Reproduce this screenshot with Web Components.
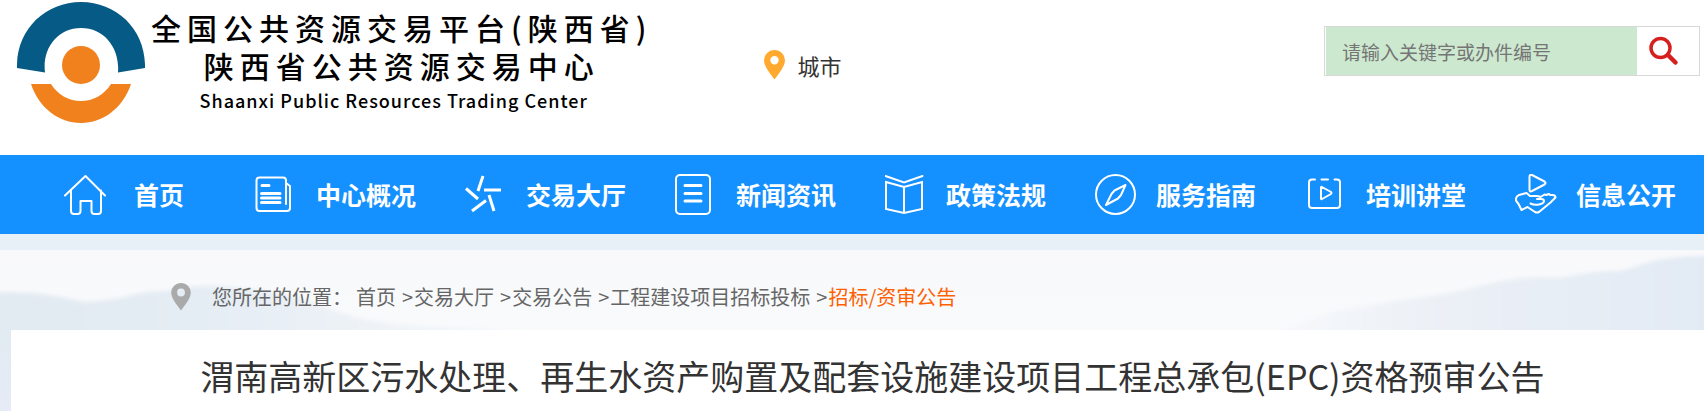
<!DOCTYPE html>
<html lang="zh-CN">
<head>
<meta charset="UTF-8">
<meta name="viewport" content="width=device-width, initial-scale=1.0">
<title>陕西省公共资源交易中心</title>
<style>
    body {
        margin: 0;
        background-color: #fff;
        color: #333;
        font-family: "Noto Sans CJK SC", sans-serif;
    }
</style>
</head>
<body>
<trade-page>
    <site-header slot="header"></site-header>
    <site-nav slot="nav">
        <nav-item icon="home">首页</nav-item>
        <nav-item icon="news">中心概况</nav-item>
        <nav-item icon="star">交易大厅</nav-item>
        <nav-item icon="list">新闻资讯</nav-item>
        <nav-item icon="book">政策法规</nav-item>
        <nav-item icon="compass">服务指南</nav-item>
        <nav-item icon="video">培训讲堂</nav-item>
        <nav-item icon="hand">信息公开</nav-item>
    </site-nav>
    <bread-crumb>
        <crumb-link>首页</crumb-link>
        <crumb-link>交易大厅</crumb-link>
        <crumb-link>交易公告</crumb-link>
        <crumb-link>工程建设项目招标投标</crumb-link>
        <crumb-link current>招标/资审公告</crumb-link>
    </bread-crumb>
    <notice-panel>渭南高新区污水处理、再生水资产购置及配套设施建设项目工程总承包(EPC)资格预审公告</notice-panel>
</trade-page>

<script>
function render(element, html) {
    const template = document.createElement('template');
    template.innerHTML = html;
    element.attachShadow({ mode: 'open' }).appendChild(template.content.cloneNode(true));
}

const ICONS = {
    home: '<path d="M1 21.5 21.5 2 41 21.5M7 16.5V37q0 3 3 3h3.5q3 0 3-3V27h11v10q0 3 3 3H34q3 0 3-3V16.5"/>',
    news: '<path d="M31 30V6.5q0-3-3-3H4.500q-3 0-3 3V34q0 3 3 3H32q3 0 3-3V12l-4-3"/><path stroke-width="3" d="M7 11.5h7M6.500 19.500h18.500M6.500 24h18.500M6.500 28.500h18.500"/>',
    star: '<path stroke-width="3" stroke-linecap="butt" d="M18 2 13 17M19 16h17M24 21l5 16M21 26.5 7 37M1 14.5 13 25"/>',
    list: '<rect x="1" y="1" width="34" height="39" rx="4"/><path stroke-width="3" d="M10 11.5h16M10 19.5h16M10 27h16"/>',
    book: '<path d="M.5 2 19 8.5 37.5 2M1 8l18 5 18-5v27l-18 4-18-4zM19 13v26" stroke-linejoin="miter"/>',
    compass: '<circle cx="20.5" cy="20.5" r="19.5"/><path d="M30.5 11 26 21l-3 3.5L11 31l5.5-11 3-3.5z"/>',
    video: '<path d="M10 5.5H7q-3 0-3 3V31q0 3 3 3h25q3 0 3-3V8.5q0-3-3-3h-2.5M16.5 5.5H23M16 13.5v11q0 1 1 .5l9-5q1-1 0-2l-9-5q-1-.5-1 .5z"/>',
    hand: '<path d="M14.500 3v12.500q0 3 2.500 1.500l12.500-6.500q2-1.500 0-3L17 1q-2.500-1-2.500 2z"/><path d="M1 24.500Q1.500 22 4 21l7.500-2 3.500 3h6.500q2 0 4 1l4-2.500 2 .500 2-1 2 1h2q3 0 3 2.500l-5 5L24 38q-2 1-4 0l-7.500-5-6 3Q4 30 1 26.500zM15.500 29.500q4 2 8.500 1 5-1 5-3.500 0-2-3-2h-4"/>'
};

const PIN = '<path fill-rule="evenodd" d="M10.500 0A10.300 10.300 0 0 0 0 10.300C0 16 5.500 23 10.500 29.500 15.500 23 21 16 21 10.300A10.300 10.300 0 0 0 10.500 0zm0 6a4.200 4.200 0 1 1 0 8.400 4.200 4.200 0 0 1 0-8.400z"/>';

class TradePage extends HTMLElement {
    constructor() {
        super();
        render(this, `
            <style>
                :host { display: block; }
                .body {
                    position: relative;
                    margin-top: 16px;
                    background: linear-gradient(#f9f9fb, #f8fafc 80px, #edf1f9);
                }
                .strip { background-color: #e8f0f7; display: flow-root; }
                .hills {
                    position: absolute;
                    left: 0;
                    top: 0;
                    width: 100%;
                    height: 161px;
                }
                main { position: relative; }
            </style>
            <slot name="header"></slot>
            <slot name="nav"></slot>
            <div class="strip">
                <div class="body">
                    <svg class="hills" viewBox="0 0 1704 161" preserveAspectRatio="none" aria-hidden="true">
                        <defs>
                            <linearGradient id="left">
                                <stop offset="0" stop-color="#e2eaf2"/>
                                <stop offset=".4" stop-color="#e5edf4"/>
                                <stop offset=".7" stop-color="#edf2f7"/>
                                <stop offset="1" stop-color="#f7f9fb"/>
                            </linearGradient>
                            <linearGradient id="right">
                                <stop offset="0" stop-color="#f6f8fb"/>
                                <stop offset=".4" stop-color="#ebf0f6"/>
                                <stop offset="1" stop-color="#e2eaf4"/>
                            </linearGradient>
                            <linearGradient id="mist" x2="0" y2="1">
                                <stop offset=".4" stop-color="#e8ecf7" stop-opacity="0"/>
                                <stop offset="1" stop-color="#e6ebf7"/>
                            </linearGradient>
                            <filter id="soft"><feGaussianBlur stdDeviation="2"/></filter>
                        </defs>
                        <g filter="url(#soft)">
                            <path fill="url(#left)" d="M-9 42 35 43Q60 46 85 52 110 50 125 47 145 40 165 41 185 36 205 36 230 36 250 39 280 43 300 48 325 58 345 64 370 73 420 76L520 79V170H-9z"/>
                            <path fill="url(#right)" d="M1280 80 1340 60 1400 50 1450 43Q1480 36 1505 30 1530 26 1560 28 1590 21 1620 21 1635 17 1650 12 1675 5 1713 6V170H1280z"/>
                        </g>
                        <path fill="url(#mist)" d="M0 50h400v111H0z"/>
                    </svg>
                    <main><slot></slot></main>
                </div>
            </div>
        `);
    }
}

class SiteHeader extends HTMLElement {
    constructor() {
        super();
        render(this, `
            <style>
                :host {
                    display: flex;
                    align-items: flex-start;
                    box-sizing: border-box;
                    min-height: 155px;
                    padding: 2px 4px 0 17px;
                }
                city-picker { margin: 45px 0 0 112px; }
                search-box { margin: 24px 0 0 auto; }
            </style>
            <site-brand></site-brand>
            <city-picker></city-picker>
            <search-box></search-box>
        `);
    }
}

class SiteBrand extends HTMLElement {
    constructor() {
        super();
        render(this, `
            <style>
                :host { display: flex; gap: 6px; }
                svg { flex: none; width: 128px; height: 121px; }
                .name {
                    display: flex;
                    flex-direction: column;
                    align-items: center;
                    padding-top: 6px;
                    color: #000;
                    white-space: nowrap;
                }
                h1, h2, p { margin: 0; font-weight: 500; }
                h1, h2 { font-size: 30px; line-height: 38px; letter-spacing: 6px; }
                p { padding-right: 16px; font-size: 18px; line-height: 32px; letter-spacing: 1px; }
            </style>
            <svg viewBox="0 0 128 121" aria-hidden="true">
                <path fill="#065a86" d="M0 66C-1 28 28 0 64 0s65 28 64 66l-27 4.500C103 47 88 26 64 26S25 47 28 70.500z"/>
                <path fill="#f0811d" d="M14 82h20c7 11 18 17 30 17s23-6 30-17h20c-8 24-28 39-50 39S22 106 14 82z"/>
                <circle cx="64" cy="63" r="19" fill="#f0811d"/>
            </svg>
            <div class="name">
                <h1>全国公共资源交易平台(陕西省)</h1>
                <h2>陕西省公共资源交易中心</h2>
                <p>Shaanxi Public Resources Trading Center</p>
            </div>
        `);
    }
}

class CityPicker extends HTMLElement {
    constructor() {
        super();
        render(this, `
            <style>
                :host { display: block; }
                a {
                    display: flex;
                    align-items: center;
                    gap: 12px;
                    color: #333;
                    font-size: 22px;
                    line-height: 36px;
                    text-decoration: none;
                    white-space: nowrap;
                }
                svg { width: 21px; height: 30px; fill: #ffa92e; }
            </style>
            <a href="#"><svg viewBox="0 0 21 30" aria-hidden="true">${PIN}</svg>城市</a>
        `);
    }
}

class SearchBox extends HTMLElement {
    constructor() {
        super();
        render(this, `
            <style>
                :host { display: block; }
                form {
                    display: flex;
                    border: 1px solid #d8d8d8;
                    padding-left: 1px;
                }
                input {
                    box-sizing: border-box;
                    width: 311px;
                    height: 48px;
                    padding: 0 16px;
                    border: none;
                    border-radius: 0;
                    outline: none;
                    background-color: #cce8cf;
                    font: inherit;
                    font-size: 19px;
                }
                input::placeholder { color: #757575; opacity: 1; }
                button {
                    display: flex;
                    align-items: center;
                    width: 62px;
                    padding: 0 12px;
                    border: none;
                    background: none;
                    cursor: pointer;
                }
                svg {
                    width: 30px;
                    height: 30px;
                    fill: none;
                    stroke: #d6201f;
                    stroke-linecap: round;
                }
            </style>
            <form>
                <input type="text" aria-label="搜索" placeholder="请输入关键字或办件编号">
                <button type="button" aria-label="搜索">
                    <svg viewBox="0 0 30 30"><circle cx="11.500" cy="12" r="9.500" stroke-width="3.500"/><path stroke-width="4.500" d="m19 19 7.500 7.500"/></svg>
                </button>
            </form>
        `);
    }
}

class SiteNav extends HTMLElement {
    constructor() {
        super();
        render(this, `
            <style>
                :host { display: block; background-color: #1590ff; }
                nav {
                    display: grid;
                    grid-template-columns: 191fr repeat(6, 210fr) 189fr;
                    align-items: center;
                    min-height: 79px;
                    padding-left: 64px;
                }
            </style>
            <nav><slot></slot></nav>
        `);
    }
}

class NavItem extends HTMLElement {
    constructor() {
        super();
        render(this, `
            <style>
                :host { display: block; }
                a {
                    display: flex;
                    align-items: center;
                    gap: 19px;
                    color: #fff;
                    font-size: 25px;
                    line-height: 36px;
                    font-weight: 700;
                    text-decoration: none;
                    white-space: nowrap;
                }
                span { min-width: 68px; padding-bottom: 2px; text-align: center; }
                svg {
                    flex: none;
                    width: 42px;
                    height: 42px;
                    fill: none;
                    stroke: #fff;
                    stroke-width: 2;
                    stroke-linecap: round;
                    stroke-linejoin: round;
                }
            </style>
            <a href="#">
                <svg viewBox="0 0 42 42" aria-hidden="true">${ICONS[this.getAttribute('icon')]}</svg>
                <span><slot></slot></span>
            </a>
        `);
    }
}

class BreadCrumb extends HTMLElement {
    constructor() {
        super();
        render(this, `
            <style>
                :host { display: block; }
                nav {
                    display: flex;
                    align-items: center;
                    min-height: 80px;
                    box-sizing: border-box;
                    padding: 14px 16px 0 171px;
                    color: #666;
                    font-size: 20px;
                    line-height: 30px;
                    white-space: nowrap;
                }
                svg { width: 20px; height: 28px; margin-right: 21px; fill: #aaa; }
                span { margin-right: 4px; }
            </style>
            <nav aria-label="位置">
                <svg viewBox="0 0 21 30" aria-hidden="true">${PIN}</svg>
                <span>您所在的位置：</span>
                <slot></slot>
            </nav>
        `);
    }
}

class CrumbLink extends HTMLElement {
    constructor() {
        super();
        render(this, `
            <style>
                :host { display: flex; }
                :host(:not(:first-child))::before { content: ">"; margin: 0 1px 0 6px; }
                a { color: inherit; text-decoration: none; }
                :host([current]) a { color: #ff6000; }
            </style>
            <a href="#"><slot></slot></a>
        `);
    }
}

class NoticePanel extends HTMLElement {
    constructor() {
        super();
        render(this, `
            <style>
                :host {
                    display: block;
                    min-height: 81px;
                    box-sizing: border-box;
                    margin-left: 11px;
                    padding: 21px 0 10px 30px;
                    background-color: #fff;
                }
                h2 {
                    margin: 0;
                    font-size: 34px;
                    line-height: 50px;
                    font-weight: 400;
                    text-align: center;
                }
            </style>
            <h2><slot></slot></h2>
        `);
    }
}

customElements.define('trade-page', TradePage);
customElements.define('site-header', SiteHeader);
customElements.define('site-brand', SiteBrand);
customElements.define('city-picker', CityPicker);
customElements.define('search-box', SearchBox);
customElements.define('site-nav', SiteNav);
customElements.define('nav-item', NavItem);
customElements.define('bread-crumb', BreadCrumb);
customElements.define('crumb-link', CrumbLink);
customElements.define('notice-panel', NoticePanel);
</script>
</body>
</html>
